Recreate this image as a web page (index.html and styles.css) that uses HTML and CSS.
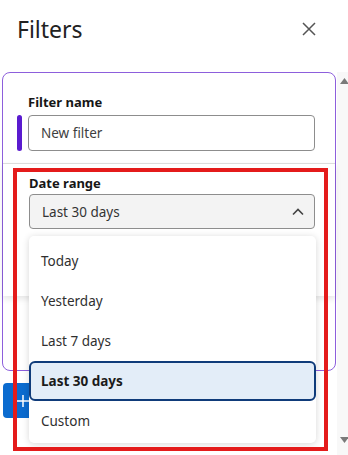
FILE: index.html
```html
<!DOCTYPE html>
<html lang="en">
<head>
<meta charset="utf-8">
<title>Filters</title>
<link rel="stylesheet" href="styles.css">
</head>
<body>
<div class="panel">
  <header class="head">
    <h1 class="title">Filters</h1>
    <button class="close" aria-label="Close">
      <svg width="14" height="14" viewBox="0 0 14 14"><path d="M1 1L13 13M13 1L1 13" stroke="#555" stroke-width="1.5" fill="none"/></svg>
    </button>
  </header>
  <div class="scroller">
    <div class="content">
      <div class="card">
        <div class="name-sec">
          <div class="lbl lbl-name">Filter name</div>
          <div class="name-row">
            <span class="bar"></span>
            <div class="input">New filter</div>
          </div>
        </div>
        <div class="date-sec">
          <div class="lbl">Date range</div>
          <div class="select-wrap">
            <div class="select">
              <span>Last 30 days</span>
              <svg width="12" height="8" viewBox="0 0 12 8"><path d="M1 6.5L6 1.5L11 6.5" stroke="#444" stroke-width="1.6" fill="none"/></svg>
            </div>
            <ul class="menu">
              <li class="item">Today</li>
              <li class="item">Yesterday</li>
              <li class="item">Last 7 days</li>
              <li class="item selected">Last 30 days</li>
              <li class="item">Custom</li>
            </ul>
          </div>
        </div>
      </div>
      <button class="add">
        <svg width="12" height="12" viewBox="0 0 12 12"><path d="M6 0V12M0 6H12" stroke="#fff" stroke-width="1.5" fill="none"/></svg>
        <span>Add filter</span>
      </button>
    </div>
    <div class="scrollbar">
      <svg width="9" height="6" viewBox="0 0 9 6"><path d="M0 6L4.5 0L9 6Z" fill="#7a7a7a"/></svg>
      <svg width="9" height="6" viewBox="0 0 9 6"><path d="M0 0L4.5 6L9 0Z" fill="#7a7a7a"/></svg>
    </div>
  </div>
  <div class="annot"></div>
</div>
</body>
</html>
```

FILE: styles.css
```css
* { box-sizing: border-box; }
html, body { margin: 0; padding: 0; background: #fff; }
body { font-family: "Noto Sans", "Open Sans", sans-serif; color: #2b2b2b; }

.panel { position: relative; width: 348px; height: 455px; overflow: hidden; }

.head {
  height: 72px;
  display: flex;
  justify-content: space-between;
  align-items: flex-start;
  padding: 15px 32px 0 17px;
}
.title { margin: 0; font-size: 23px; line-height: 28px; font-weight: 400; color: #222; }
.close {
  margin-top: 7px;
  padding: 0; border: 0; background: none;
  width: 14px; height: 14px; display: block;
}
.close svg { display: block; }

.scroller { display: flex; height: 383px; }
.content { width: 337px; display: flex; flex-direction: column; align-items: flex-start; }

.card {
  margin-left: 2px;
  width: 334px;
  height: 299px;
  border: 1px solid #8d5fdc;
  border-radius: 8px;
  position: relative;
  z-index: 2;
}

.lbl { font-size: 13px; line-height: 18px; font-weight: 700; color: #161616; }
.lbl-name { margin-left: 11px; }

.name-sec { padding: 20px 20px 12px 14px; }
.name-row { display: flex; gap: 6px; margin-top: 4px; }
.bar { width: 5px; border-radius: 3px; background: #5a1bcf; }
.input {
  flex: 1;
  height: 36px;
  border: 1px solid #8d8d8d;
  border-radius: 4px;
  padding-left: 12px;
  display: flex; align-items: center;
  font-size: 13.5px; color: #3e3e3e;
}

.date-sec {
  border-top: 1px solid #dcdcdc;
  padding: 10px 20px 67px 26px;
  background: #fff;
  box-shadow: 0 3px 6px rgba(0,0,0,0.10);
}
.date-sec .lbl { margin-bottom: 2px; }
.select-wrap { position: relative; }
.select {
  height: 35px;
  background: #f3f3f3;
  border: 1px solid #8d8d8d;
  border-radius: 4px;
  padding: 0 10px 0 12px;
  display: flex; align-items: center; justify-content: space-between;
  font-size: 13.5px; color: #333;
}
.select svg { display: block; }

.menu {
  position: absolute;
  left: 0; right: -1px; top: 42px;
  margin: 0;
  padding: 5px 0 2px;
  list-style: none;
  background: #fff;
  border-radius: 5px;
  box-shadow: 0 1px 7px rgba(0,0,0,0.16);
  z-index: 5;
}
.item {
  height: 40px;
  border: 2px solid transparent;
  border-radius: 6px;
  padding-left: 10px;
  display: flex; align-items: center;
  font-size: 13.5px; color: #2f2f2f;
}
.item.selected {
  border-color: #0f3b7a;
  background: #e3edf8;
  font-weight: 700;
  color: #1b1b1b;
}

.add {
  margin: 12px 0 0 3px;
  height: 35px;
  padding: 0 14px;
  border: 0;
  border-radius: 4px;
  background: #0b6bcf;
  color: #fff;
  font-family: inherit;
  font-size: 14px;
  display: flex; align-items: center; gap: 8px;
  position: relative;
  z-index: 1;
}
.add svg { display: block; }

.scrollbar {
  width: 11px;
  background: #f8f8f8;
  display: flex; flex-direction: column; justify-content: space-between; align-items: center;
  padding: 6px 0 12px 0;
}
.scrollbar svg { display: block; margin-left: 3px; }

.annot {
  position: absolute;
  left: 13px; top: 168px;
  width: 315px; height: 283px;
  border: 4px solid #e41b1b;
  z-index: 10;
  pointer-events: none;
}
```
